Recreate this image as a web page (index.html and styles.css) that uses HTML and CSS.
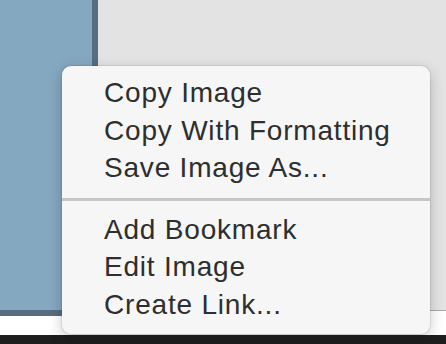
FILE: index.html
```html
<!DOCTYPE html>
<html lang="en">
<head>
  <meta charset="UTF-8">
  <title>Image Context Menu</title>
  <link rel="stylesheet" href="styles.css">
</head>
<body>
  <div class="window">
    <div class="workspace">
      <div class="sidebar"></div>
      <div class="canvas"></div>
    </div>
    <div class="footer"></div>
    <div class="statusbar"></div>
  </div>

  <ul class="context-menu">
    <li>Copy Image</li>
    <li>Copy With Formatting</li>
    <li>Save Image As...</li>
    <li class="separator"></li>
    <li>Add Bookmark</li>
    <li>Edit Image</li>
    <li>Create Link...</li>
  </ul>
</body>
</html>
```

FILE: styles.css
```css
body {
  margin: 0;
  width: 446px;
  height: 344px;
  overflow: hidden;
  font-family: "Liberation Sans", Arial, sans-serif;
  background-color: #ffffff;
}

.window {
  display: flex;
  flex-direction: column;
  height: 344px;
}

.workspace {
  display: flex;
  align-items: flex-start;
  height: 316px;
}

.sidebar {
  width: 92px;
  height: 310px;
  background-color: #84a8bf;
  border-right: 6px solid #566e80;
  border-bottom: 6px solid #566e80;
}

.canvas {
  flex: 1;
  height: 310px;
  background-color: #e3e3e3;
  border-bottom: 1px solid #a9a9a9;
}

.footer {
  flex: 1;
  background-color: #ffffff;
}

.statusbar {
  height: 9px;
  background-color: #1e1e1e;
}

.context-menu {
  position: absolute;
  left: 62px;
  top: 66px;
  width: 368px;
  margin: 0;
  padding: 8px 0 11px;
  list-style: none;
  background-color: #f6f6f6;
  border-radius: 9px;
  box-shadow: 0 0 0 1px rgba(0, 0, 0, 0.07), 0 4px 14px rgba(0, 0, 0, 0.22);
}

.context-menu li {
  padding-left: 42px;
  font-size: 28px;
  line-height: 37.5px;
  letter-spacing: 0.8px;
  color: #2e2e2e;
}

.context-menu .separator {
  height: 3px;
  padding: 0;
  margin: 11px 0 10px;
  background-color: #c6c6c6;
}
```
